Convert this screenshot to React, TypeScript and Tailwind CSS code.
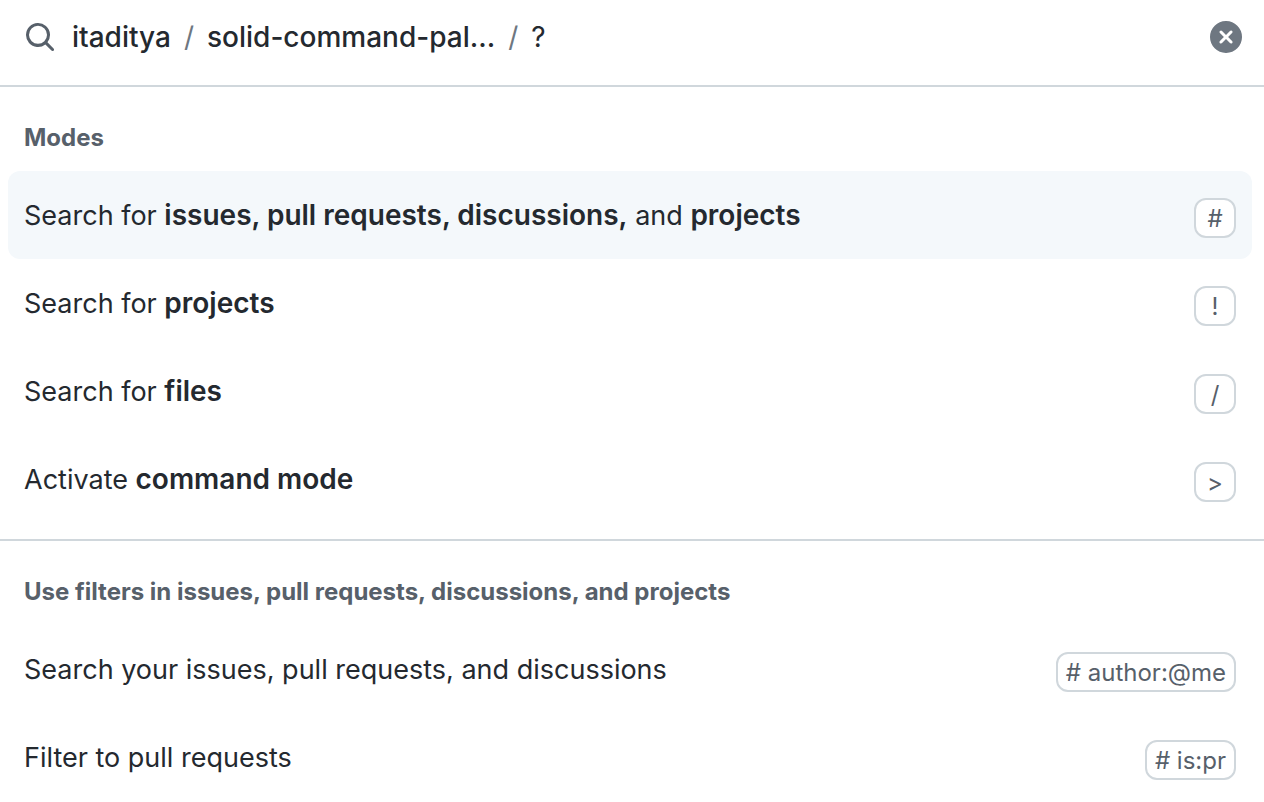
import type { ReactNode } from 'react';

function Key({ children }: { children: ReactNode }) {
  return (
    <kbd className="mt-1 flex h-10 min-w-[42px] shrink-0 items-center justify-center rounded-[12px] border-2 border-[#d0d7dc] bg-white px-2 pt-0.5 font-[Inter,sans-serif] text-[24px] leading-8 text-[#57606a]">
      {children}
    </kbd>
  );
}

function Strong({ children }: { children: ReactNode }) {
  return <b className="text-[28px] leading-none font-semibold">{children}</b>;
}

function Row({ children, hint, active = false }: { children: ReactNode; hint: string; active?: boolean }) {
  return (
    <li>
      <button
        type="button"
        className={`flex h-22 w-full items-center justify-between rounded-[12px] px-4 pt-0.5 text-left text-[27px] leading-10 text-[#24292f] ${active ? 'bg-[#f4f8fb]' : 'bg-white'}`}
      >
        <span>{children}</span>
        <Key>{hint}</Key>
      </button>
    </li>
  );
}

export default function App() {
  return (
    <main className="min-h-screen overflow-hidden bg-white font-[Inter,sans-serif] text-[#24292f]">
      <header className="flex h-[87px] items-start border-b-2 border-[#d0d7dc] pt-[17px] pr-[22px] pl-6">
        <svg className="mt-1 h-8 w-8 shrink-0" viewBox="0 0 16 16" fill="#57606a" aria-hidden="true">
          <path d="M10.68 11.74a6 6 0 0 1-7.922-8.982 6 6 0 0 1 8.982 7.922l3.04 3.04a.749.749 0 0 1-.326 1.275.749.749 0 0 1-.734-.215ZM11.5 7a4.499 4.499 0 1 0-8.997 0A4.499 4.499 0 0 0 11.5 7Z" />
        </svg>
        <div className="ml-4 flex grow items-center text-[28px] leading-10 font-medium">
          <a href="#owner">itaditya</a>
          <span className="mx-[13px] font-normal text-[#6e7781]">/</span>
          <a href="#repo">solid-command-pal...</a>
          <span className="mx-[13px] font-normal text-[#6e7781]">/</span>
          <input aria-label="Command palette search" defaultValue="?" className="min-w-0 grow bg-transparent font-normal outline-none" />
        </div>
        <button type="button" aria-label="Clear" className="mt-1">
          <svg className="h-8 w-8" viewBox="0 0 16 16" fill="#6e7781" aria-hidden="true">
            <path d="M2.343 13.657A8 8 0 1 1 13.658 2.343 8 8 0 0 1 2.343 13.657ZM6.03 4.97a.751.751 0 0 0-1.042.018.751.751 0 0 0-.018 1.042L6.94 8 4.97 9.97a.749.749 0 0 0 .326 1.275.749.749 0 0 0 .734-.215L8 9.06l1.97 1.97a.749.749 0 0 0 1.275-.326.749.749 0 0 0-.215-.734L9.06 8l1.97-1.97a.749.749 0 0 0-.326-1.275.749.749 0 0 0-.734.215L8 6.94Z" />
          </svg>
        </button>
      </header>
      <section className="pt-[33px] pr-3 pb-4 pl-2">
        <h2 className="mb-[15px] px-4 text-[24px] leading-9 font-bold text-[#57606a]">Modes</h2>
        <ul>
          <Row hint="#" active>
            Search for <Strong>issues, pull requests, discussions,</Strong> and <Strong>projects</Strong>
          </Row>
          <Row hint="!">Search for <Strong>projects</Strong></Row>
          <Row hint="/">Search for <Strong>files</Strong></Row>
          <Row hint=">">Activate <Strong>command mode</Strong></Row>
        </ul>
      </section>
      <section className="border-t-2 border-[#d0d7dc] pt-[33px] pr-3 pl-2">
        <h2 className="mb-[15px] px-4 text-[24px] leading-9 font-bold text-[#57606a]">
          Use filters in issues, pull requests, discussions, and projects
        </h2>
        <ul>
          <Row hint="# author:@me">Search your issues, pull requests, and discussions</Row>
          <Row hint="# is:pr">Filter to pull requests</Row>
        </ul>
      </section>
    </main>
  );
}
